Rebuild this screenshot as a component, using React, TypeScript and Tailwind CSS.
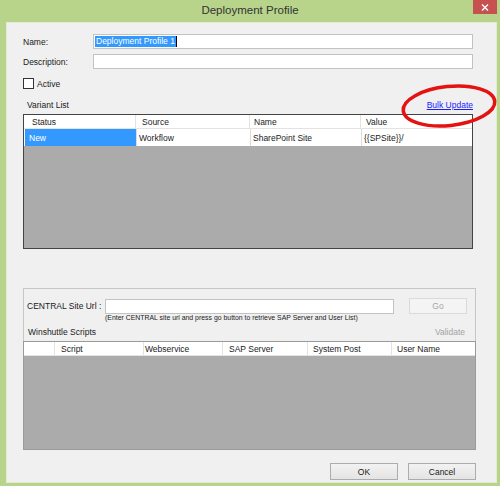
import React from "react";

const font = { fontFamily: '"Liberation Sans", Arial, sans-serif' };

function Input({ w, children }: { w: string; children?: React.ReactNode }) {
  return (
    <div className={`${w} h-[15px] bg-white border border-[#c3c3c3] flex items-center pl-[1px]`}>{children}</div>
  );
}

export default function App() {
  return (
    <div
      className="relative w-[500px] h-[486px] bg-[#b8d48b] flex flex-col text-[8.5px] leading-[10px] text-[#1a1a1a] overflow-hidden"
      style={font}
    >
      {/* title bar */}
      <div className="relative h-[22px] flex items-center justify-center">
        <span className="text-[11.5px] text-[#333] mt-[-2px]">Deployment Profile</span>
        <div className="absolute top-0 right-[3px] w-[24px] h-[14px] bg-[#c75050] flex items-center justify-center">
          <svg width="8" height="7" viewBox="0 0 8 7">
            <path d="M1 0.5 L7 6.5 M7 0.5 L1 6.5" stroke="white" strokeWidth="1.4" />
          </svg>
        </div>
      </div>

      {/* client */}
      <div className="ml-[6px] mr-[3px] mb-[3px] flex-1 bg-[#f0f0f0] border border-[#e2ecd2] flex flex-col pl-[16px] pr-[23px]">
        {/* Name */}
        <div className="mt-[11px] flex items-center h-[15px]">
          <span className="w-[70px]">Name:</span>
          <Input w="w-[380px]">
            <span className="bg-[#3399ff] text-white px-[1px] leading-[11px]">Deployment Profile 1</span>
            <span className="w-px h-[11px] bg-black" />
          </Input>
        </div>
        {/* Description */}
        <div className="mt-[5px] flex items-center h-[15px]">
          <span className="w-[70px]">Description:</span>
          <Input w="w-[380px]" />
        </div>
        {/* Active */}
        <div className="mt-[9px] flex items-center h-[11px] gap-[3px]">
          <div className="w-[11px] h-[11px] border border-[#333] bg-white" />
          <span>Active</span>
        </div>
        {/* Variant list header */}
        <div className="mt-[11px] flex items-center justify-between h-[10px] pl-[4px]">
          <span>Variant List</span>
          <span className="text-[#1a1aff] underline">Bulk Update</span>
        </div>
        {/* Variant table */}
        <div className="mt-[4px] w-[450px] h-[135px] border border-[#444] bg-[#ababab] flex flex-col">
          <div className="h-[14px] bg-white flex border-b border-[#e3e3e3]">
            <div className="w-[112px] pl-[8px] border-r border-[#e3e3e3] flex items-center">Status</div>
            <div className="w-[114px] pl-[6px] border-r border-[#e3e3e3] flex items-center">Source</div>
            <div className="w-[111px] pl-[4px] border-r border-[#e3e3e3] flex items-center">Name</div>
            <div className="flex-1 pl-[5px] flex items-center">Value</div>
          </div>
          <div className="h-[17px] flex bg-white">
            <div className="w-[112px] bg-[#3399ff] text-white pl-[4px] flex items-center ml-[1px] border-r border-[#dcdcdc]">New</div>
            <div className="w-[114px] pl-[2px] border-r border-[#dcdcdc] flex items-center">Workflow</div>
            <div className="w-[111px] pl-[2px] border-r border-[#dcdcdc] flex items-center">SharePoint Site</div>
            <div className="flex-1 pl-[2px] flex items-center">{"{{SPSite}}/"}</div>
          </div>
        </div>

        {/* group box */}
        <div className="mt-[39px] w-[453px] h-[162px] border border-b-0 border-[#c6c6c6] flex flex-col">
          <div className="mt-[9px] flex items-center h-[16px] pl-[3px]">
            <span className="w-[78px]">CENTRAL Site Url :</span>
            <Input w="w-[289px]" />
            <div className="ml-[15px] w-[58px] h-[16px] border border-[#dadada] bg-[#f4f4f4] text-[#a6a6a6] flex items-center justify-center">
              Go
            </div>
          </div>
          <div className="h-[8px] pl-[81px] text-[6.9px] leading-[8px] whitespace-nowrap">
            (Enter CENTRAL site url and press go button to retrieve SAP Server and User List)
          </div>
          <div className="mt-[5px] h-[10px] flex items-center justify-between pl-[4px] pr-[10px]">
            <span>Winshuttle Scripts</span>
            <span className="text-[#a3a3a3]">Validate</span>
          </div>
          <div className="mt-[4px] -mx-px flex-1 border border-[#9a9a9a] bg-[#ababab] flex flex-col">
            <div className="h-[14px] bg-white flex border-b border-[#e3e3e3]">
              <div className="w-[31px] border-r border-[#e3e3e3]" />
              <div className="w-[89px] pl-[6px] border-r border-[#e3e3e3] flex items-center">Script</div>
              <div className="w-[79px] pl-[1px] border-r border-[#e3e3e3] flex items-center">Webservice</div>
              <div className="w-[85px] pl-[6px] border-r border-[#e3e3e3] flex items-center">SAP Server</div>
              <div className="w-[84px] pl-[5px] border-r border-[#e3e3e3] flex items-center">System Post</div>
              <div className="flex-1 pl-[5px] flex items-center">User Name</div>
            </div>
          </div>
        </div>

        {/* buttons */}
        <div className="mt-[13px] flex justify-end gap-[10px] mr-[-3px]">
          <div className="w-[68px] h-[17px] border border-[#acacac] bg-gradient-to-b from-[#f2f2f2] to-[#e4e4e4] flex items-center justify-center">
            OK
          </div>
          <div className="w-[68px] h-[17px] border border-[#acacac] bg-gradient-to-b from-[#f2f2f2] to-[#e4e4e4] flex items-center justify-center">
            Cancel
          </div>
        </div>
      </div>

      {/* red annotation oval */}
      <svg className="absolute left-[400px] top-[82px]" width="100" height="50" viewBox="0 0 100 50">
        <ellipse
          cx="49"
          cy="24"
          rx="46"
          ry="19.5"
          fill="none"
          stroke="#e51212"
          strokeWidth="3.5"
          transform="rotate(-6 49 24)"
        />
      </svg>
    </div>
  );
}
